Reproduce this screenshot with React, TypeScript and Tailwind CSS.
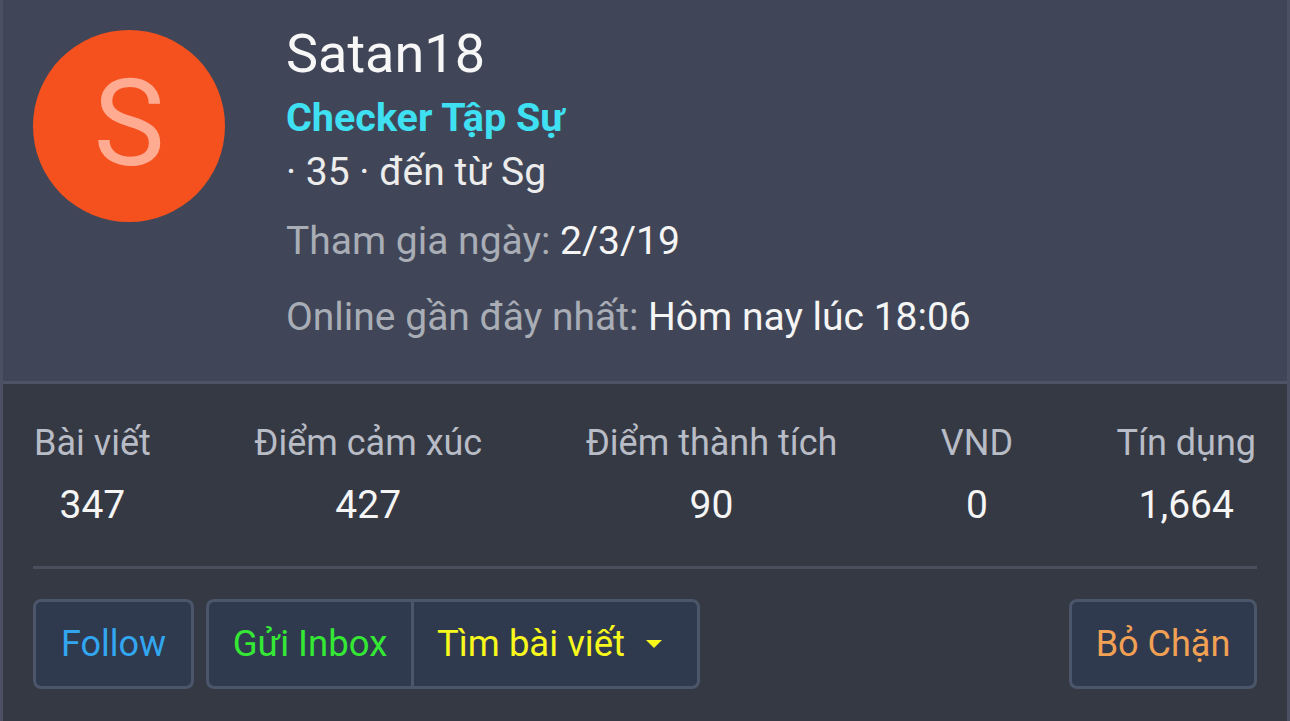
import React from "react";

const stats = [
  { label: "Bài viết", value: "347" },
  { label: "Điểm cảm xúc", value: "427" },
  { label: "Điểm thành tích", value: "90" },
  { label: "VND", value: "0" },
  { label: "Tín dụng", value: "1,664" },
];

export default function App() {
  return (
    <div className="w-[1290px] h-[721px] overflow-hidden bg-[#353943] border-x-[3px] border-[#4b5162] font-['Roboto',sans-serif]">
      <div className="h-[384px] bg-[#404657] border-b-[3px] border-[#4e5466] flex items-start pl-[30px] pt-[22px]">
        <div className="mt-[8px] w-[192px] h-[192px] rounded-full bg-[#f4511e] flex items-center justify-center text-[#ffab91] text-[120px] leading-none">
          <span className="-mt-[4px]">S</span>
        </div>
        <div className="ml-[61px] flex flex-col">
          <div className="text-[54px] leading-[64px] text-[#f7f7f7]">Satan18</div>
          <div className="mt-[9px] text-[39.5px] leading-[46px] font-bold text-[#3fe0f2]">Checker Tập Sự</div>
          <div className="mt-[9px] text-[39px] leading-[44px] text-[#ececec]">· 35 · đến từ Sg</div>
          <div className="mt-[25px] text-[39px] leading-[44px] text-[#a9adb6]">
            Tham gia ngày: <span className="text-[#f5f5f5]">2/3/19</span>
          </div>
          <div className="mt-[32px] text-[39px] leading-[44px] text-[#a9adb6]">
            Online gần đây nhất: <span className="text-[#f5f5f5]">Hôm nay lúc 18:06</span>
          </div>
        </div>
      </div>
      <div className="px-[30px]">
        <div className="pt-[38px] flex justify-between px-[1px]">
          {stats.map((s) => (
            <div key={s.label} className="flex flex-col items-center">
              <div className="text-[36px] leading-[42px] text-[#b8bcc6]">{s.label}</div>
              <div className="mt-[19px] text-[39px] leading-[44px] text-[#f5f5f5]">{s.value}</div>
            </div>
          ))}
        </div>
        <div className="mt-[39px] h-[3px] bg-[#4a4f5d]" />
        <div className="mt-[30px] flex items-stretch h-[90px]">
          <button className="w-[161px] h-full rounded-[8px] border-[3px] border-[#4b566b] bg-[#2f3a4f] text-[36px] text-[#33a6f0] flex items-center justify-center">
            Follow
          </button>
          <div className="ml-[12px] h-full flex rounded-[8px] border-[3px] border-[#4b566b] bg-[#2f3a4f] overflow-hidden">
            <button className="w-[205px] h-full text-[36.5px] text-[#34e834] flex items-center justify-center border-r-[3px] border-[#4b566b]">
              Gửi Inbox
            </button>
            <button className="w-[283px] h-full text-[36.5px] text-[#f8f81c] flex items-center pl-[23px]">
              Tìm bài viết
              <svg className="ml-[21px]" width="16" height="8" viewBox="0 0 16 8">
                <polygon points="0,0 16,0 8,8" fill="#f8f81c" />
              </svg>
            </button>
          </div>
          <div className="flex-1" />
          <button className="w-[188px] h-full rounded-[8px] border-[3px] border-[#4b566b] bg-[#2f3a4f] text-[36px] text-[#f2a154] flex items-center justify-center">
            Bỏ Chặn
          </button>
        </div>
      </div>
    </div>
  );
}
